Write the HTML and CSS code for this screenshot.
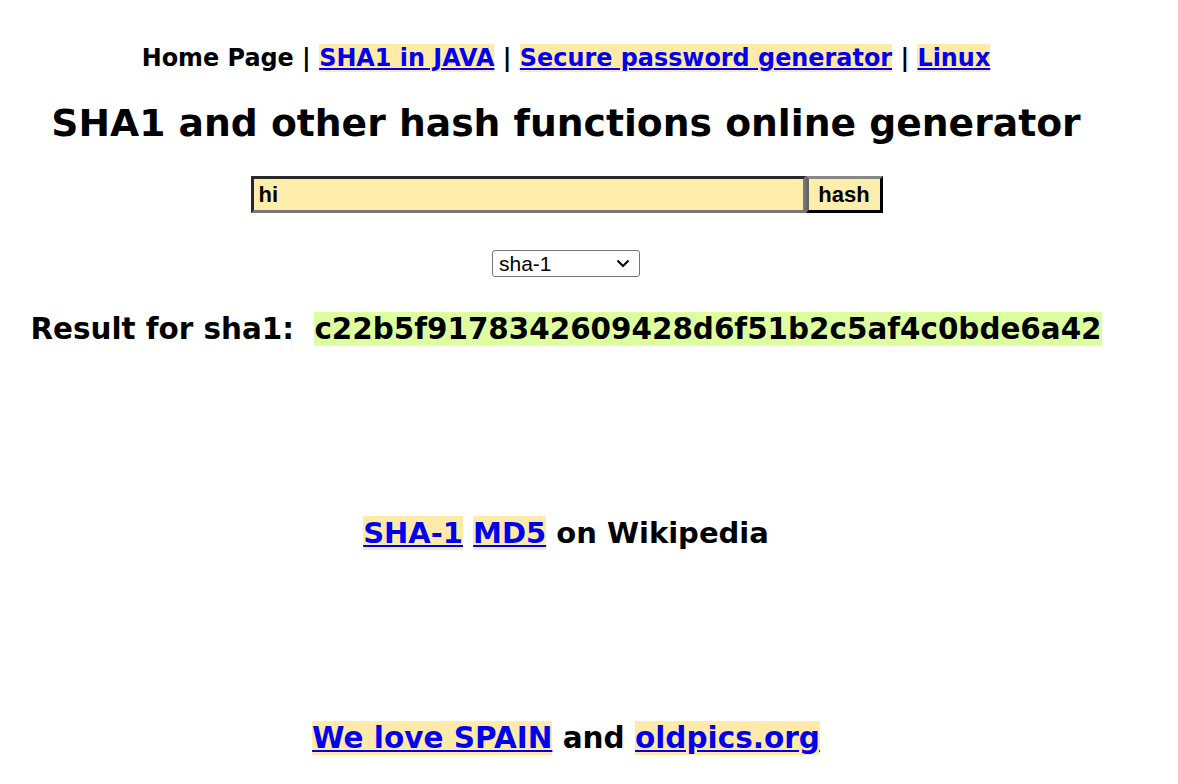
FILE: index.html
```html
<!DOCTYPE html>
<html>
<head>
<meta charset="utf-8">
<title>SHA1 online</title>
<link rel="stylesheet" href="styles.css">
</head>
<body>
<div class="page">
<div class="nav">Home Page | <a href="#">SHA1 in JAVA</a> | <a href="#">Secure password generator</a> | <a href="#">Linux</a></div>
<h1 class="title">SHA1 and other hash functions online generator</h1>
<form class="form">
<div class="row"><input class="text" type="text" value="hi"><button class="btn" type="button">hash</button></div>
<div class="selrow"><span class="selwrap"><select class="sel"><option>sha-1</option><option>md5</option></select><svg class="chev" width="14" height="9" viewBox="0 0 14 9"><path d="M1.5 1.5 L7 7 L12.5 1.5" fill="none" stroke="#000" stroke-width="2"/></svg></span></div>
</form>
<div class="result">Result for sha1:&nbsp; <span class="hash">c22b5f9178342609428d6f51b2c5af4c0bde6a42</span></div>
<div class="wiki"><a href="#">SHA-1</a> <a href="#">MD5</a> on Wikipedia</div>
<div class="spain"><a href="#">We love SPAIN</a> and <a href="#">oldpics.org</a></div>
</div>
</body>
</html>
```
FILE: styles.css
```css
body {
  margin: 0;
  font-family: Verdana, "DejaVu Sans", sans-serif;
  font-weight: bold;
  color: #000;
  background: #fff;
}
.page {
  width: 1132px;
  text-align: center;
}
a {
  color: #0000ee;
  background: #ffeaaa;
}
.nav {
  padding-top: 44px;
  font-size: 23.9px;
  line-height: 28px;
}
.title {
  font-size: 37.7px;
  margin: 28px 0 0;
  line-height: 46px;
}
.form {
  margin-top: 30px;
}
.row {
  display: flex;
  justify-content: center;
  padding-left: 1px;
}
.text {
  width: 555px;
  height: 37px;
  box-sizing: border-box;
  border: 3px solid;
  border-color: #2a2a2a #777 #777 #2a2a2a;
  outline: none;
  background: #ffeeab;
  font-family: "Liberation Sans", Arial, sans-serif;
  font-weight: bold;
  font-size: 22px;
  padding: 0 5px;
  margin: 0;
}
.btn {
  width: 77px;
  height: 37px;
  box-sizing: border-box;
  border: 3px solid;
  border-color: #888 #000 #000 #666;
  background: #ffeeab;
  font-family: "Liberation Sans", Arial, sans-serif;
  font-weight: bold;
  font-size: 22px;
  color: #000;
  margin: 0;
  padding: 0;
}
.selrow {
  margin-top: 37px;
  display: flex;
  justify-content: center;
}
.selwrap {
  position: relative;
  display: inline-block;
  height: 27px;
}
.sel {
  appearance: none;
  -webkit-appearance: none;
  width: 148px;
  height: 27px;
  box-sizing: border-box;
  font-family: "Liberation Sans", Arial, sans-serif;
  font-size: 21px;
  font-weight: normal;
  color: #000;
  background: #fff;
  border: 1px solid #767676;
  border-radius: 3px;
  padding: 0 0 0 6px;
  margin: 0;
  display: block;
}
.chev {
  position: absolute;
  right: 10px;
  top: 9px;
  pointer-events: none;
}
.result {
  margin-top: 34px;
  font-size: 29.4px;
  line-height: 36px;
}
.hash {
  background: #ddff9f;
}
.wiki {
  margin-top: 168px;
  font-size: 29px;
  line-height: 36px;
}
.spain {
  margin-top: 169px;
  font-size: 29.5px;
  line-height: 36px;
}
```
